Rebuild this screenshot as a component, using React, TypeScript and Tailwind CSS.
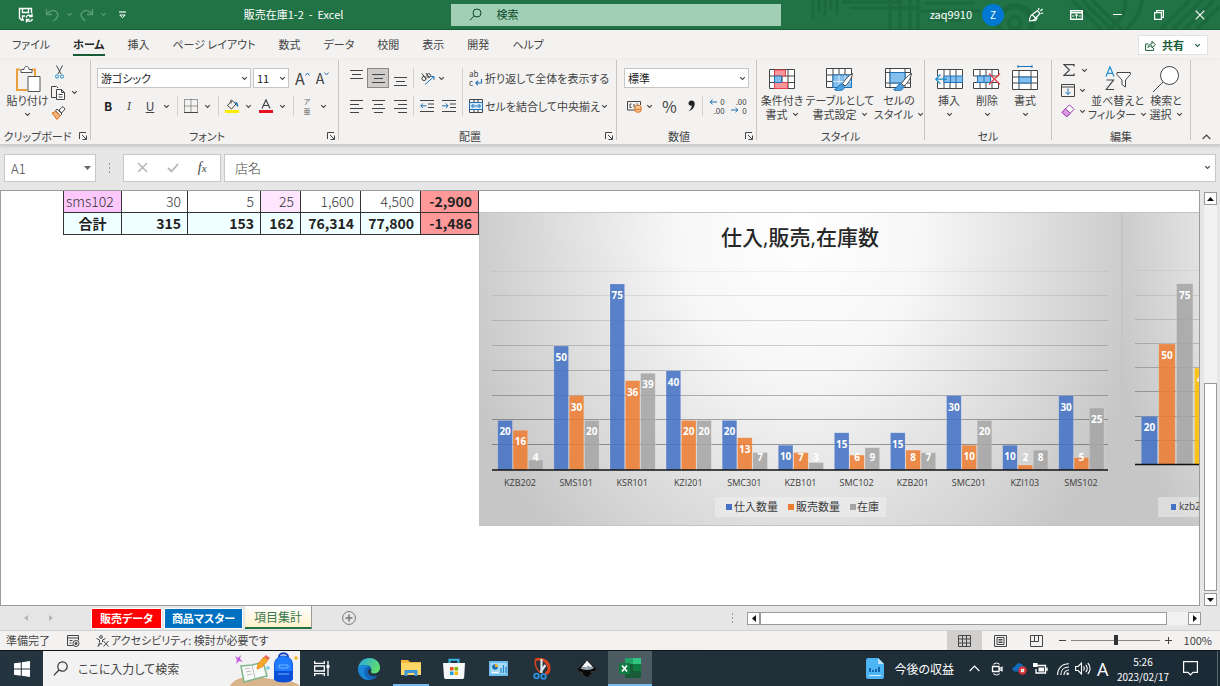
import type { ReactNode } from 'react';

interface SvgProps {
  w: number;
  h: number;
  className?: string;
  children: ReactNode;
}

function Svg({ w, h, className = '', children }: SvgProps) {
  return (
    <svg width={w} height={h} viewBox={`0 0 ${w} ${h}`} fill="none" stroke="currentColor" className={`shrink-0 ${className}`} aria-hidden="true">
      {children}
    </svg>
  );
}

function Chevron({ className = '' }: { className?: string }) {
  return (
    <Svg w={7} h={5} className={className}>
      <path d="M1.2 1.2 3.5 3.4 5.8 1.2" strokeWidth="1.1" />
    </Svg>
  );
}

function MenuButton({ label }: { label: string }) {
  return (
    <button aria-label={label} className="flex h-5 w-[10px] items-center justify-center">
      <Chevron />
    </button>
  );
}

function Sep() {
  return <div className="mx-1.5 h-5 w-px bg-[#d2d0ce]" />;
}

function Divider() {
  return <div className="mb-1 w-px shrink-0 bg-[#c8c6c4]" />;
}

/* ---------- title bar ---------- */

function TitleBar() {
  return (
    <header className="relative flex h-[30px] shrink-0 items-center overflow-hidden border-b border-[#185c37] bg-[#217346] text-[11px] text-white">
      <svg className="pointer-events-none absolute top-0 right-0" width="410" height="30" viewBox="0 0 410 30" fill="none" stroke="#1c693e" aria-hidden="true">
        <path d="M3 0v19M9 0v13M15 0v17M21 0v10M27 0v15M80 0v30M90 0v30M100 0v30M108 0v30" strokeWidth="3" />
        <path d="M32 2h60M40 8h70M115 3h50M110 11h60M118 20h34" strokeWidth="3" />
        <circle cx="205" cy="23" r="17" strokeWidth="6" />
        <circle cx="205" cy="23" r="6" strokeWidth="4" />
        <path d="M262 0l30 30M272 0l30 30M282 0l30 30M315 0c2 12-6 22-16 30M332 0c-2 14-8 22-16 30M350 30l30-30M362 30l30-30M374 30l30-30M386 30l24-24" strokeWidth="4" />
      </svg>
      <div className="relative flex w-[37%] items-center">
        <div className="flex flex-1 items-center pl-[18px]">
          <button aria-label="上書き保存">
            <Svg w={16} h={16}>
              <path d="M6 13H3.500L1.500 11V1.500h12V6M4.500 1.500v4h6v-4M4.500 13V9H7" strokeWidth="1.400" />
              <path d="M8 10.500c1-3 4.500-3 5.500-1M14 6.500V9.500h-3M14.500 12c-1 3-4.500 3-5.500 1M8.500 15.500v-3h3" strokeWidth="1.400" />
            </Svg>
          </button>
          <button aria-label="元に戻す" className="ml-[11px] flex items-center gap-1.5 text-[#5a9a75]">
            <Svg w={15} h={14}>
              <path d="M1.500 1v5.500H7M1.500 6.500C5 2 9 1.500 11.500 4s2 5-3 9" strokeWidth="1.400" />
            </Svg>
            <Chevron />
          </button>
          <button aria-label="やり直し" className="ml-1.5 flex items-center gap-1.5 text-[#5a9a75]">
            <Svg w={15} h={14}>
              <path d="M13.500 1v5.500H8M13.500 6.500C10 2 6 1.500 3.500 4s-2 5 3 9" strokeWidth="1.400" />
            </Svg>
            <Chevron />
          </button>
          <button aria-label="クイック アクセス ツール バーのカスタマイズ" className="ml-3">
            <Svg w={7} h={8}>
              <path d="M0 1h7" strokeWidth="1.200" />
              <path d="M.8 4h5.400L3.500 6.800z" />
            </Svg>
          </button>
        </div>
        <h1 className="mr-[108px] whitespace-pre">販売在庫1-2  -  Excel</h1>
      </div>
      <label className="relative flex h-[22px] w-[27%] items-center gap-3.5 bg-[#a0cfb5] pl-[18px] text-[#0f4a28]">
        <Svg w={13} h={13}>
          <circle cx="8" cy="5" r="4" />
          <path d="M5.200 8 .8 12.300" />
        </Svg>
        <input aria-label="検索" placeholder="検索" className="min-w-0 flex-1 bg-transparent outline-none placeholder:text-[#0f4a28]" />
      </label>
      <div className="relative flex flex-1 items-center justify-end">
        <span>zaq9910</span>
        <button className="ml-2.5 flex size-[22px] items-center justify-center rounded-full bg-[#0078d4] text-[10px]">Z</button>
        <button aria-label="近日公開の機能" className="ml-3 flex w-10 justify-center">
          <Svg w={16} h={15}>
            <path d="M1.500 14c0-2 0-3.500 1.500-5.500L9.500 3.500 12 6.500 6.500 12.500c-1.500 1.200-3 1.500-5 1.500zM5 13.500c2.500.5 4-.5 4-3M10.500 3l.5-2M12.500 4 14.500 2M13 6.500l2.300-.5M4.500 8l3 3" strokeWidth="1.200" />
          </Svg>
        </button>
        <button aria-label="リボンの表示オプション" className="flex w-[41px] justify-center">
          <Svg w={13} h={10}>
            <path d="M.7.7h11.600v8.600H.7zM.7 2.700h11.600" strokeWidth="1.400" />
            <path d="M6.500 8V4.200M4.700 5.800l1.800-1.600 1.800 1.600M2 6h2M9 6h2" />
          </Svg>
        </button>
        <button aria-label="最小化" className="flex w-[41px] justify-center">
          <Svg w={9} h={9}><path d="M0 4.500h9" /></Svg>
        </button>
        <button aria-label="元に戻す (縮小)" className="flex w-[41px] justify-center">
          <Svg w={10} h={10}>
            <path d="M.6 2.600h6.800v6.800H.6z" strokeWidth="1.200" />
            <path d="M2.600 2.600v-2h6.800v6.800h-2" strokeWidth="1.200" />
          </Svg>
        </button>
        <button aria-label="閉じる" className="flex w-[41px] justify-center">
          <Svg w={10} h={10}><path d="m.7.7 8.600 8.600M9.300.7.7 9.300" strokeWidth="1.200" /></Svg>
        </button>
      </div>
    </header>
  );
}

const menuTabs = ['ファイル', 'ホーム', '挿入', 'ページ レイアウト', '数式', 'データ', '校閲', '表示', '開発', 'ヘルプ'];

function MenuTabs() {
  return (
    <nav className="flex h-[30px] shrink-0 items-center pr-3 pl-3">
      <div className="flex flex-1 items-center gap-[23px] text-[11px]">
        {menuTabs.map((tab) => (
          <button
            key={tab}
            className={
              tab === 'ホーム'
                ? 'h-[22px] border-b-2 border-[#185c37] font-bold whitespace-nowrap text-[#262626]'
                : 'h-[22px] border-b-2 border-transparent whitespace-nowrap'
            }
          >
            {tab}
          </button>
        ))}
      </div>
      <button className="flex h-5 items-center gap-1.5 border border-[#e4e2e0] bg-white px-1.5 text-[11px] font-bold text-[#185c37]">
        <Svg w={11} h={11}>
          <path d="M3.500 4H.6v6.400h8V8M3 7.500C3.500 5 5 3.800 7 3.800V1.200l3.400 3.500L7 8V5.800C5 5.800 4 6.300 3 7.500z" />
        </Svg>
        共有
        <Chevron className="ml-1" />
      </button>
    </nav>
  );
}

/* ---------- ribbon ---------- */

interface GroupProps {
  label: string;
  className: string;
  launcher?: boolean;
  children: ReactNode;
}

function Group({ label, className, launcher, children }: GroupProps) {
  return (
    <>
      <section aria-label={label} className={`flex shrink-0 flex-col ${className}`}>
        <div className="h-[68px]">{children}</div>
        <div className="flex h-4 items-center text-[11px]">
          <span className="flex-1 text-center whitespace-nowrap">{label}</span>
          {launcher && (
            <button aria-label={`${label}の設定`} className="mr-[3px] ml-1">
              <Svg w={8} h={8}>
                <path d="M.5 7V.5H7M3 3l4 4M7.500 3.500v4h-4" />
              </Svg>
            </button>
          )}
        </div>
      </section>
      <Divider />
    </>
  );
}

interface BigButtonProps {
  lines: [string, string?];
  className: string;
  icon: ReactNode;
}

function BigButton({ lines, className, icon }: BigButtonProps) {
  return (
    <button className={`flex shrink-0 flex-col items-center pt-1 text-[11px] leading-[14px] whitespace-nowrap ${className}`}>
      <span className="flex h-[29px] items-center">{icon}</span>
      <span>{lines[0]}</span>
      <span className="flex h-[14px] items-center gap-1">
        {lines[1]}
        <Chevron />
      </span>
    </button>
  );
}

interface ComboProps {
  label: string;
  value: string;
  className: string;
}

function Combo({ label, value, className }: ComboProps) {
  return (
    <div className={`relative h-5 ${className}`}>
      <select aria-label={label} className="block h-5 w-full appearance-none border border-[#c8c6c4] bg-white pl-[3px] text-[11px] text-[#222]">
        <option>{value}</option>
      </select>
      <Chevron className="pointer-events-none absolute top-2 right-[3px]" />
    </div>
  );
}

function Lines({ d }: { d: string }) {
  return (
    <Svg w={13} h={13}><path d={d} stroke="#444" /></Svg>
  );
}

const gridPath = 'M.5 2.500h25v19H.5zM.5 9h25M.5 15.500h25M7 2.500v19M13 2.500v19M19 2.500v19';

function Brush() {
  return (
    <>
      <path d="M26.500 7.500c-4 2-8 7-10 10l2.500 2.500c3.500-3 7-8 7.500-12.500z" fill="#fff" stroke="#444" />
      <path d="M15.500 18c-3.500 0-3 4.500-7 5.500 3 2.500 9.500 1.500 10-2.500z" fill="#4ba0dc" stroke="#1e72b8" />
    </>
  );
}

function Ribbon() {
  return (
    <div className="relative z-10 flex shrink-0 border-b border-[#d0cecc] shadow-[0_1px_3px_rgba(0,0,0,0.18)]">
      <Group label="クリップボード" className="w-[90px]" launcher>
        <div className="flex">
          <BigButton
            className="w-[55px]"
            lines={['貼り付け']}
            icon={
              <Svg w={26} h={28}>
                <path d="M5 4.500H2V25H12M17 4.500h3V11" stroke="#e9a03b" strokeWidth="2" />
                <path d="M6 7.500V4.500h3c0-4 5-4 5 0h3v3z" fill="#fff" stroke="#555" />
                <path d="M13 11.500h12v15H13z" fill="#fff" stroke="#555" />
              </Svg>
            }
          />
          <div className="flex flex-col items-start pt-1">
            <button aria-label="切り取り" className="h-4">
              <Svg w={9} h={14}>
                <path d="M1.500.5 6 9M7.500.5 3 9" stroke="#444" />
                <circle cx="2" cy="11.500" r="1.600" stroke="#1e8bcd" />
                <circle cx="7" cy="11.500" r="1.600" stroke="#1e8bcd" />
              </Svg>
            </button>
            <button aria-label="コピー" className="-ml-1 flex h-[25px] items-center gap-1.5">
              <Svg w={14} h={14}>
                <path d="M5 11.500H.5V.5h5l1.500 1.500" />
                <path d="M5.500 3.500h5l3 3v7h-8zM10.500 3.500v3h3M7.500 8.500h4M7.500 11h4" fill="#fff" />
              </Svg>
              <Chevron />
            </button>
            <button aria-label="書式のコピー/貼り付け" className="-ml-1 h-4">
              <Svg w={15} h={14}>
                <path d="m8 4 4-3.500L14 3l-3.500 4z" fill="#fff" stroke="#444" />
                <path d="m6 3 5 5-1.500 1.500L4.500 5z" fill="#fff" stroke="#444" />
                <path d="M4.500 5.500 1 7l5 6.500 3.500-4z" fill="#f4b27c" stroke="#d8711c" />
              </Svg>
            </button>
          </div>
        </div>
      </Group>

      <Group label="フォント" className="w-[247px]" launcher>
        <div className="flex flex-col gap-2 pt-2 pl-1.5">
          <div className="flex h-5 items-center">
            <Combo label="フォント名" value="游ゴシック" className="w-[154px]" />
            <Combo label="フォント サイズ" value="11" className="ml-0.5 w-9" />
            <button aria-label="フォント サイズの拡大" className="ml-1.5 flex text-base leading-5">
              A<Svg w={5} h={4} className="mt-1 text-[#1e72b8]"><path d="M.5 3.500 2.500 1l2 2.500" /></Svg>
            </button>
            <button aria-label="フォント サイズの縮小" className="ml-1.5 flex text-sm leading-5">
              A<Svg w={5} h={4} className="mt-1 text-[#1e72b8]"><path d="m.5.5 2 2.500 2-2.500" /></Svg>
            </button>
          </div>
          <div className="flex h-5 items-center text-xs">
            <button aria-label="太字" className="w-[22px] font-bold text-[#222]">B</button>
            <button aria-label="斜体" className="w-5 font-serif italic">I</button>
            <button aria-label="下線" className="w-[22px] underline">U</button>
            <MenuButton label="下線の種類" />
            <Sep />
            <button aria-label="罫線">
              <Svg w={14} h={14}>
                <path d="M.5.5h13v13H.5zM7 .5v13M.5 7h13" strokeDasharray="1 1" />
                <path d="M0 13.500h14" />
              </Svg>
            </button>
            <span className="w-1" />
            <MenuButton label="罫線の種類" />
            <Sep />
            <button aria-label="塗りつぶしの色">
              <Svg w={14} h={14}>
                <path d="M7 1.500 2.500 6.500l4 3.500L11 5zM6 .5v4" stroke="#444" />
                <path d="M10.500 3.500c1.500.5 2 2 2 4" stroke="#1e72b8" strokeWidth="1.600" />
                <path d="M0 12.500h14" stroke="#ffee00" strokeWidth="3" />
              </Svg>
            </button>
            <span className="w-1" />
            <MenuButton label="塗りつぶしの色を選択" />
            <span className="w-1.5" />
            <button aria-label="フォントの色">
              <Svg w={14} h={14}>
                <path d="M3 9.500 7 .8l4 8.700M4.500 6.500h5" stroke="#444" strokeWidth="1.200" />
                <path d="M0 12.500h14" stroke="#e81123" strokeWidth="3" />
              </Svg>
            </button>
            <span className="w-1" />
            <MenuButton label="フォントの色を選択" />
            <Sep />
            <button aria-label="ふりがなの表示" className="flex h-5 w-3.5 flex-col items-center text-[7px] leading-[10px] text-[#666]">
              <span>ア</span>
              <span>亜</span>
            </button>
            <span className="w-1" />
            <MenuButton label="ふりがなの設定" />
          </div>
        </div>
      </Group>

      <Group label="配置" className="w-[277px]" launcher>
        <div className="flex pt-2 pl-1.5">
          <div className="grid grid-cols-3 gap-y-2">
            <button aria-label="上揃え" className="flex h-5 w-[22px] justify-center"><Lines d="M0 2.500h13M2 6.500h9M0 10.500h13" /></button>
            <button aria-label="上下中央揃え" className="flex h-5 w-[22px] items-center justify-center border border-[#8a8886] bg-[#cfcdcb]"><Lines d="M0 2.500h13M2 6.500h9M0 10.500h13" /></button>
            <button aria-label="下揃え" className="flex h-5 w-[22px] items-end justify-center"><Lines d="M0 2.500h13M2 6.500h9M0 10.500h13" /></button>
            <button aria-label="左揃え" className="flex h-5 w-[22px] items-center justify-center"><Lines d="M0 .5h13M0 4.500h9M0 8.500h13M0 12.500h9" /></button>
            <button aria-label="中央揃え" className="flex h-5 w-[22px] items-center justify-center"><Lines d="M0 .5h13M2 4.500h9M0 8.500h13M2 12.500h9" /></button>
            <button aria-label="右揃え" className="flex h-5 w-[22px] items-center justify-center"><Lines d="M0 .5h13M4 4.500h9M0 8.500h13M4 12.500h9" /></button>
          </div>
          <div className="mr-1.5 ml-0.5 flex flex-col gap-2">
            <div className="h-5 w-px bg-[#d2d0ce]" />
            <div className="h-5 w-px bg-[#d2d0ce]" />
          </div>
          <div className="flex flex-col gap-2">
            <div className="flex h-5 items-center">
              <button aria-label="方向">
                <Svg w={16} h={15}>
                  <circle cx="4" cy="7.500" r="2.100" />
                  <path d="M2 2.500 6 8M6 2l3.500 5" />
                  <circle cx="8.700" cy="4.500" r="1.900" />
                  <path d="m5 13.500 9-8M10.500 5.500H14V9" stroke="#1e72b8" />
                </Svg>
              </button>
              <MenuButton label="方向の種類" />
            </div>
            <div className="flex h-5 items-center gap-2">
              <button aria-label="インデントを減らす">
                <Svg w={14} h={12}>
                  <path d="M0 .5h14M8 4h6M8 7.500h6M0 11.500h14" />
                  <path d="M6.500 5.800H.8M3 3.500.7 5.800 3 8" stroke="#1e72b8" />
                </Svg>
              </button>
              <button aria-label="インデントを増やす">
                <Svg w={14} h={12}>
                  <path d="M0 .5h14M8 4h6M8 7.500h6M0 11.500h14" />
                  <path d="M0 5.800h6M3.800 3.500l2.300 2.300L3.800 8" stroke="#1e72b8" />
                </Svg>
              </button>
            </div>
          </div>
          <div className="mx-1.5 h-12 w-px bg-[#d2d0ce]" />
          <div className="flex flex-1 flex-col gap-2 text-[11px]">
            <button className="flex h-5 items-center gap-0.5 whitespace-nowrap">
              <span className="relative flex h-[18px] w-3.5 flex-col items-start text-[8px] leading-[9px]">
                <span>ab</span>
                <span>c</span>
                <Svg w={8} h={8} className="absolute right-0 bottom-0 text-[#1e72b8]">
                  <path d="M6.500 0v4H1M3 1.800.8 4 3 6.200" strokeWidth="1.200" />
                </Svg>
              </span>
              折り返して全体を表示する
            </button>
            <div className="flex h-5 items-center">
              <button className="flex items-center gap-0.5 whitespace-nowrap">
                <Svg w={14} h={14}>
                  <path d="M.5.5h13v13H.5zM5 .5v3M9 .5v3M5 10.500v3M9 10.500v3" />
                  <path d="M.5 3.500h13v7H.5z" fill="#d5eafb" stroke="#1e72b8" />
                  <path d="M2.500 7h9M4.500 5l-2 2 2 2M9.500 5l2 2-2 2" stroke="#1e72b8" />
                </Svg>
                セルを結合して中央揃え
              </button>
              <MenuButton label="結合の種類" />
            </div>
          </div>
        </div>
      </Group>

      <Group label="数値" className="w-[139px]" launcher>
        <div className="flex flex-col gap-2 px-[7px] pt-2">
          <Combo label="表示形式" value="標準" className="w-full" />
          <div className="flex h-5 items-center">
            <span className="w-[3px]" />
            <button aria-label="通貨表示形式">
              <Svg w={15} h={13}>
                <path d="M8 10H.5V1.500h13V5M4.500 4H3v3.500h1.500M7 4v3.500M9.500 4h1.500" />
                <path d="M8 6.500c0-1.500 6-1.500 6 0v4.500c0 1.500-6 1.500-6 0z" fill="#f7c79a" stroke="#d8711c" />
                <path d="M8 8.800c1 1 5 1 6 0" stroke="#d8711c" />
              </Svg>
            </button>
            <span className="w-0.5" />
            <MenuButton label="通貨の種類" />
            <button aria-label="パーセント スタイル" className="ml-2 text-base leading-5">%</button>
            <button aria-label="桁区切りスタイル" className="ml-2.5">
              <Svg w={9} h={12}>
                <path d="M4.500.5C2.500.5 1.500 2 1.500 3.300 1.500 5 3 6 4.800 5.600 4.600 8 3.500 9.800 1.500 11.300c4-1.300 6.300-4.500 6.200-7.800C7.600 1.500 6.300.5 4.500.5z" fill="#222" stroke="none" />
              </Svg>
            </button>
            <Sep />
            <button aria-label="小数点以下の表示桁数を増やす" className="relative flex h-[18px] w-4 flex-col items-end text-[8px] leading-[9px]">
              <span>0</span>
              <span>.00</span>
              <Svg w={8} h={6} className="absolute top-0.5 left-0 text-[#1e72b8]"><path d="M8 3H1M3.500.8 1 3l2.500 2.200" /></Svg>
            </button>
            <button aria-label="小数点以下の表示桁数を減らす" className="relative ml-1.5 flex h-[18px] w-4 flex-col items-end text-[8px] leading-[9px]">
              <span>.00</span>
              <span>0</span>
              <Svg w={8} h={6} className="absolute bottom-0.5 left-0 text-[#1e72b8]"><path d="M0 3h7M4.500.8 7 3 4.500 5.200" /></Svg>
            </button>
          </div>
        </div>
      </Group>

      <Group label="スタイル" className="w-[167px]">
        <div className="flex pl-0.5">
          <BigButton
            className="w-[46px]"
            lines={['条件付き', '書式']}
            icon={
              <Svg w={26} h={24}>
                <path d={gridPath} fill="#fff" />
                <path d="M5.500 3h11v6h-11zM5.500 15.500h13v6h-13z" fill="#f8969b" stroke="#e8414b" />
                <path d="M5.500 9h7v6.500h-7z" fill="#83beec" stroke="#1e72b8" />
              </Svg>
            }
          />
          <BigButton
            className="w-[70px]"
            lines={['テーブルとして', '書式設定']}
            icon={
              <Svg w={28} h={25}>
                <path d={gridPath} fill="#fff" />
                <path d="M7 9h18.500v12.500H7z" fill="#83beec" stroke="#1e72b8" />
                <path d="M7 15.500h18M13 9v12M19 9v12" stroke="#d5eafb" />
                <Brush />
              </Svg>
            }
          />
          <BigButton
            className="w-12"
            lines={['セルの', 'スタイル']}
            icon={
              <Svg w={28} h={25}>
                <path d="M.5 2.500h25v19H.5zM.5 6.500h25M5 2.500v19M20 2.500v19M.5 17h25" fill="#fff" />
                <path d="M5 6.500h15V17H5z" fill="#83beec" stroke="#1e72b8" />
                <Brush />
              </Svg>
            }
          />
        </div>
      </Group>

      <Group label="セル" className="w-[126px]">
        <div className="flex pl-[5px]">
          <BigButton
            className="w-[38px]"
            lines={['挿入']}
            icon={
              <Svg w={28} h={24}>
                <path d="M2.500 2.500h25v19h-25zM9 2.500v19M15 2.500v19M21 2.500v19" fill="#fff" />
                <path d="M9 9h18.500v6.500H9z" fill="#83beec" stroke="#1e72b8" />
                <path d="M15.500 9v6M21 9v6" stroke="#1e72b8" />
                <path d="M0 9h8v6H0z" fill="#f3f2f1" stroke="none" />
                <path d="M12 12.200H1M5.500 7.500.8 12.200l4.700 4.700" stroke="#1e8bcd" strokeWidth="1.300" />
              </Svg>
            }
          />
          <BigButton
            className="w-[38px]"
            lines={['削除']}
            icon={
              <Svg w={28} h={24}>
                <path d="M.5 2.500h25V9H.5zM.5 15.500h25v6H.5zM7 2.500V9M13 2.500V9M19 2.500V9M7 15.500v6M13 15.500v6M19 15.500v6" fill="#fff" />
                <path d="M4.500 9h13v6.500h-13zM11 9v6.500" fill="#83beec" stroke="#1e72b8" />
                <path d="m16 6.500 11 11M27 6.500l-11 11" stroke="#e8414b" strokeWidth="1.300" />
              </Svg>
            }
          />
          <BigButton
            className="w-[38px]"
            lines={['書式']}
            icon={
              <Svg w={26} h={28}>
                <path d="M.5 5.500h25v19H.5zM.5 12h25M.5 18h25M7 5.500v19M19 5.500v19" fill="#fff" />
                <path d="M7 12h12v6H7z" fill="#83beec" stroke="#1e72b8" />
                <path d="M6 1.500h14M6 0v3M20 0v3" stroke="#1e72b8" />
              </Svg>
            }
          />
        </div>
      </Group>

      <Group label="編集" className="w-[138px]">
        <div className="flex pl-[7px]">
          <div className="flex flex-col">
            <button aria-label="オート SUM" className="flex h-5 w-8 items-center gap-1.5 pl-1">
              <Svg w={12} h={12}><path d="M11 2.500V.6H1L6.500 6 1 11.400h10V9.500" strokeWidth="1.200" /></Svg>
              <Chevron />
            </button>
            <button aria-label="フィル" className="flex h-[21px] w-8 items-center gap-1 pl-0.5">
              <Svg w={14} h={13}>
                <path d="M.5.5h13v12H.5zM.5 3h13" />
                <path d="M7 4.500v6M4.500 8 7 10.500 9.500 8" stroke="#1e72b8" />
              </Svg>
              <Chevron />
            </button>
            <button aria-label="クリア" className="flex h-5 w-8 items-center gap-1 pl-0.5">
              <Svg w={14} h={14}>
                <path d="M8.500.8 13 5.300 5.800 12.800 1 8.300z" fill="#fff" stroke="#a23bb0" />
                <path d="m4.500 4.700 4.800 4.600-3.500 3.500L1 8.300z" fill="#d99be0" stroke="#a23bb0" />
              </Svg>
              <Chevron />
            </button>
          </div>
          <BigButton
            className="w-[53px]"
            lines={['並べ替えと', 'フィルター']}
            icon={
              <Svg w={26} h={25}>
                <path d="m1 10.500 4-9.700 4 9.700M2.400 7.300h5.200" stroke="#1e8bcd" strokeWidth="1.200" />
                <path d="M1.500 14h7l-7.200 9.500H9" strokeWidth="1.200" />
                <path d="M12 6.500h13.300v2L20.500 14v7l-3.500-2.500V14L12 8.500z" fill="#fff" />
              </Svg>
            }
          />
          <BigButton
            className="w-11"
            lines={['検索と', '選択']}
            icon={
              <Svg w={28} h={28}>
                <circle cx="17.500" cy="10.500" r="9" fill="#fff" />
                <path d="M11 17 1 27" />
              </Svg>
            }
          />
        </div>
      </Group>

      <div className="flex flex-1 items-end justify-end pr-[9px] pb-1">
        <button aria-label="リボンを折りたたむ">
          <Svg w={9} h={6}><path d="m.7 5 3.800-3.800L8.300 5" strokeWidth="1.200" /></Svg>
        </button>
      </div>
    </div>
  );
}

/* ---------- formula bar ---------- */

function FormulaBar() {
  return (
    <div className="flex h-[45px] shrink-0 items-center bg-[#e6e6e6] px-1 text-[#444]">
      <div className="flex h-7 w-[92px] items-center border border-[#c8c8c8] bg-white pr-1">
        <input aria-label="名前ボックス" defaultValue="A1" className="w-full min-w-0 flex-1 pt-0.5 pl-1.5 text-[13px] font-light outline-none" />
        <Svg w={7} h={4}><path d="M0 0h7L3.500 4z" fill="#666" stroke="none" /></Svg>
      </div>
      <Svg w={3} h={12} className="mx-3"><path d="M1.500 1v2M1.500 5v2M1.500 9v2" stroke="#999" /></Svg>
      <div className="flex h-7 w-[98px] items-center justify-around border border-[#c8c8c8] bg-white px-1">
        <button aria-label="キャンセル"><Svg w={11} h={11}><path d="m1 1 9 9M10 1l-9 9" stroke="#b5b5b5" strokeWidth="1.500" /></Svg></button>
        <button aria-label="入力"><Svg w={12} h={10}><path d="m1 5 3.500 3.500L11 1" stroke="#b5b5b5" strokeWidth="1.800" /></Svg></button>
        <button aria-label="関数の挿入" className="font-['Liberation_Serif',serif] text-sm italic">
          f<span className="text-[11px]">x</span>
        </button>
      </div>
      <div className="ml-[3px] flex h-7 flex-1 items-center border border-[#c8c8c8] bg-white pr-1">
        <input aria-label="数式バー" defaultValue="店名" className="min-w-0 flex-1 pl-2.5 text-[13px] font-light outline-none" />
        <Chevron />
      </div>
    </div>
  );
}

/* ---------- sheet ---------- */

const BLUE = '#4472c4';
const ORANGE = '#ed7d31';
const GRAY = '#a5a5a5';
const YELLOW = '#ffc000';

const stock: [string, number, number, number][] = [
  ['KZB202', 20, 16, 4],
  ['SMS101', 50, 30, 20],
  ['KSR101', 75, 36, 39],
  ['KZI201', 40, 20, 20],
  ['SMC301', 20, 13, 7],
  ['KZB101', 10, 7, 3],
  ['SMC102', 15, 6, 9],
  ['KZB201', 15, 8, 7],
  ['SMC201', 30, 10, 20],
  ['KZI103', 10, 2, 8],
  ['SMS102', 30, 5, 25],
];

interface BarProps {
  x: number;
  base: number;
  unit: number;
  width: number;
  value: number;
  color: string;
}

function Bar({ x, base, unit, width, value, color }: BarProps) {
  const top = base - value * unit;
  return (
    <g>
      <rect x={x} y={top} width={width} height={base - top} fill={color} fillOpacity="0.87" stroke="#ffffff" strokeOpacity="0.25" strokeWidth="0.6" />
      <text x={x + width / 2} y={Math.min(top + 15, base - 9)} textAnchor="middle" fontSize="10" fontWeight="700" fill="#fff">
        {value}
      </text>
    </g>
  );
}

function GridLines({ x1, x2, base, step }: { x1: number; x2: number; base: number; step: number }) {
  return (
    <>
      {[1, 2, 3, 4, 5, 6, 7, 8].map((n) => (
        <path key={n} d={`M${x1} ${Math.round(base - n * step) - 0.5}H${x2}`} stroke="#000" strokeOpacity={0.4 - n * 0.044} />
      ))}
    </>
  );
}

function StockChart() {
  const series = [BLUE, ORANGE, GRAY];
  return (
    <svg width="643" height="314" viewBox="0 0 643 314" className="mt-[21px] shrink-0 font-['Open_Sans','Noto_Sans_CJK_JP',sans-serif] [font-feature-settings:normal]" role="img" aria-label="仕入,販売,在庫数">
      <defs>
        <radialGradient id="stock-bg" gradientUnits="userSpaceOnUse" cx="0" cy="0" r="1" gradientTransform="translate(321 0) scale(355 460)">
          <stop offset="0" stopColor="#ffffff" />
          <stop offset="0.35" stopColor="#f7f7f7" />
          <stop offset="1" stopColor="#c6c6c6" />
        </radialGradient>
      </defs>
      <rect x="0.5" y="0.5" width="642" height="313" fill="url(#stock-bg)" stroke="#c4c4c4" />
      <text x="321" y="33" textAnchor="middle" fontSize="21" fontWeight="500" fill="#262626">仕入,販売,在庫数</text>
      <GridLines x1={13} x2={629} base={258} step={24.8} />
      {stock.map(([name, ...values], i) => (
        <g key={name}>
          {values.map((value, s) => (
            <Bar key={s} x={18.800 + i * 56.100 + s * 15.300} base={258} unit={2.480} width={14.600} value={value} color={series[s]} />
          ))}
          <text x={41 + i * 56.100} y="274" textAnchor="middle" fontSize="9" fill="#404040">{name}</text>
        </g>
      ))}
      <path d="M13 258h616" stroke="#111" strokeWidth="1.500" />
      <rect x="236" y="285" width="171" height="20" fill="#f2f2f2" fillOpacity="0.5" />
      <g fontSize="11" fill="#404040">
        <rect x="247" y="292" width="6" height="6" fill={BLUE} />
        <text x="255" y="299">仕入数量</text>
        <rect x="309" y="292" width="6" height="6" fill={ORANGE} />
        <text x="317" y="299">販売数量</text>
        <rect x="371" y="292" width="6" height="6" fill={GRAY} />
        <text x="378" y="299">在庫</text>
      </g>
    </svg>
  );
}

function PurchaseChart() {
  return (
    <svg width="480" height="314" viewBox="0 0 480 314" className="mt-[21px] shrink-0 font-['Open_Sans','Noto_Sans_CJK_JP',sans-serif]" role="img" aria-label="仕入数量">
      <defs>
        <radialGradient id="purchase-bg" gradientUnits="userSpaceOnUse" cx="0" cy="0" r="1" gradientTransform="translate(240 0) scale(260 440)">
          <stop offset="0" stopColor="#ffffff" />
          <stop offset="0.35" stopColor="#f7f7f7" />
          <stop offset="1" stopColor="#c6c6c6" />
        </radialGradient>
      </defs>
      <rect x="0" y="0.500" width="480" height="313" fill="url(#purchase-bg)" stroke="#c4c4c4" />
      <GridLines x1={13} x2={467} base={253} step={24.200} />
      <Bar x={19.300} base={252.500} unit={2.410} width={16.200} value={20} color={BLUE} />
      <Bar x={36.800} base={252.500} unit={2.410} width={16.400} value={50} color={ORANGE} />
      <Bar x={54.500} base={252.500} unit={2.410} width={16.400} value={75} color={GRAY} />
      <Bar x={72.500} base={252.500} unit={2.410} width={16.400} value={40} color={YELLOW} />
      <path d="M13 252.500h454" stroke="#111" strokeWidth="1.500" />
      <rect x="36" y="285" width="400" height="20" fill="#f2f2f2" fillOpacity="0.5" />
      <rect x="49" y="292" width="5" height="6" fill={BLUE} />
      <text x="57" y="298" fontSize="10" fill="#404040">kzb202</text>
    </svg>
  );
}

function Sheet() {
  const cell = 'border border-[#333] px-1.5 py-0 text-right';
  return (
    <div className="flex min-h-0 flex-1 bg-[#e6e6e6]">
      <main className="flex min-w-0 flex-1 items-start overflow-hidden border border-[#9b9b9b] bg-white">
        <div className="flex w-full min-w-0 items-start">
          <table className="ml-[62px] w-[415px] shrink-0 table-fixed border-collapse text-sm leading-[18px] text-[#333]">
            <colgroup>
              <col className="w-[58px]" />
              <col className="w-[66px]" />
              <col className="w-[73px]" />
              <col className="w-10" />
              <col className="w-[60px]" />
              <col className="w-[60px]" />
              <col className="w-[58px]" />
            </colgroup>
            <tbody>
              <tr className="h-[21px] font-light">
                <td className="border border-t-0 border-[#333] bg-[#fcc8fc] px-0.5 py-0">sms102</td>
                <td className={`${cell} border-t-0`}>30</td>
                <td className={`${cell} border-t-0`}>5</td>
                <td className={`${cell} border-t-0 bg-[#ffe6ff]`}>25</td>
                <td className={`${cell} border-t-0`}>1,600</td>
                <td className={`${cell} border-t-0`}>4,500</td>
                <td className={`${cell} border-t-0 bg-[#ff9999] font-bold text-[#222]`}>-2,900</td>
              </tr>
              <tr className="h-[22px] bg-[#f0ffff] font-bold text-[#222]">
                <td className="border border-[#333] py-0 text-center">合計</td>
                <td className={cell}>315</td>
                <td className={cell}>153</td>
                <td className={cell}>162</td>
                <td className={cell}>76,314</td>
                <td className={cell}>77,800</td>
                <td className={`${cell} bg-[#ff9999]`}>-1,486</td>
              </tr>
            </tbody>
          </table>
          <StockChart />
          <PurchaseChart />
        </div>
      </main>
      <div className="flex w-5 shrink-0 flex-col items-center pt-0.5">
        <button aria-label="上へスクロール" className="flex h-[13px] w-[13px] items-center justify-center border border-[#999] bg-white">
          <Svg w={7} h={4}><path d="M0 4h7L3.500 0z" fill="#111" stroke="none" /></Svg>
        </button>
        <div className="flex w-[13px] flex-1 flex-col bg-[#f2f2f2]">
          <div className="h-[46%]" />
          <div className="h-[54%] border border-[#999] bg-white" />
        </div>
        <button aria-label="下へスクロール" className="mt-0.5 flex h-[13px] w-[13px] items-center justify-center border border-[#999] bg-white">
          <Svg w={7} h={4}><path d="M0 0h7L3.500 4z" fill="#111" stroke="none" /></Svg>
        </button>
      </div>
    </div>
  );
}

function SheetTabs() {
  return (
    <div className="flex h-[25px] shrink-0 items-center border-b border-[#d0d0d0] bg-[#e6e6e6] text-[11px]">
      <div className="flex w-[91px] items-center gap-[21px] pl-6">
        <button aria-label="前のシート"><Svg w={4} h={6}><path d="M4 0v6L0 3z" fill="#b5b5b5" stroke="none" /></Svg></button>
        <button aria-label="次のシート"><Svg w={4} h={6}><path d="M0 0v6l4-3z" fill="#b5b5b5" stroke="none" /></Svg></button>
      </div>
      <button className="mr-0.5 h-[21px] w-[71px] border border-white bg-[#ff0000] font-bold whitespace-nowrap text-white">販売データ</button>
      <button className="mr-0.5 h-[21px] w-[79px] border border-white bg-[#0070c0] font-bold whitespace-nowrap text-white">商品マスター</button>
      <button className="h-[23px] w-[67px] self-start border-r border-b-2 border-[#217346] border-r-[#999] bg-linear-to-b from-white to-[#fff2cc] text-xs text-[#3b7a50]">項目集計</button>
      <button aria-label="新しいシート" className="ml-[30px] text-[#777]">
        <Svg w={14} h={14}>
          <circle cx="7" cy="7" r="6.400" />
          <path d="M7 3.500v7M3.500 7h7" strokeWidth="1.500" />
        </Svg>
      </button>
      <div className="flex-1" />
      <Svg w={3} h={12} className="mr-[13px]"><path d="M1.500 1v2M1.500 5v2M1.500 9v2" stroke="#999" /></Svg>
      <div className="mr-[19px] flex w-[454px] items-center">
        <button aria-label="左へスクロール" className="flex h-[13px] w-[13px] items-center justify-center border border-[#999] bg-white">
          <Svg w={4} h={7}><path d="M4 0v7L0 3.500z" fill="#111" stroke="none" /></Svg>
        </button>
        <div className="flex h-[13px] flex-1 bg-[#f2f2f2]">
          <div className="w-[95%] border border-[#999] bg-white" />
        </div>
        <button aria-label="右へスクロール" className="flex h-[13px] w-[13px] items-center justify-center border border-[#999] bg-white">
          <Svg w={4} h={7}><path d="M0 0v7l4-3.500z" fill="#111" stroke="none" /></Svg>
        </button>
      </div>
    </div>
  );
}

function StatusBar() {
  return (
    <div className="flex h-[19px] shrink-0 items-center pl-1.5 text-[11px] text-[#444]">
      <span>準備完了</span>
      <button aria-label="マクロの記録" className="ml-[17px]">
        <Svg w={13} h={12}>
          <path d="M6 10.500H.5v-10h11v5M.5 3h11M2.500 5.500h3M2.500 8h2" />
          <circle cx="9" cy="8.500" r="3" fill="#f3f2f1" />
          <circle cx="9" cy="8.500" r="1" fill="#444" />
        </Svg>
      </button>
      <button className="ml-4 flex items-center gap-0.5 whitespace-nowrap">
        <Svg w={13} h={12}>
          <circle cx="5" cy="2" r="1.400" />
          <path d="m.5 3.500 3 1.500v2.500L2 11.500 5 8l1 1.500M9.500 3.500l-3 1.500v2M7.500 6l5 5.500M12.500 6l-5 5.500" />
        </Svg>
        アクセシビリティ: 検討が必要です
      </button>
      <div className="flex-1" />
      <button aria-label="標準" className="flex h-[19px] w-[35px] items-center justify-center bg-[#d2d0ce]">
        <Svg w={13} h={12}><path d="M.5.5h12v11H.5zM.5 4h12M.5 8h12M4.500.5v11M8.500.5v11" /></Svg>
      </button>
      <button aria-label="ページ レイアウト" className="flex w-9 justify-center">
        <Svg w={13} h={12}><path d="M.5.5h12v11H.5zM3 2.500h7v7H3zM4.500 4.500h4M4.500 6h4M4.500 7.500h4" /></Svg>
      </button>
      <button aria-label="改ページ プレビュー" className="flex w-9 justify-center">
        <Svg w={13} h={12}><path d="M.5.5h12v11H.5zM4.500.5v6h4v-6M.5 6.500h4" /></Svg>
      </button>
      <button aria-label="縮小" className="ml-[5px]"><Svg w={7} h={7}><path d="M0 3.500h7" /></Svg></button>
      <input
        aria-label="ズーム"
        type="range"
        defaultValue={50}
        className="mx-[5px] h-3 w-[89px] appearance-none bg-transparent [&::-webkit-slider-runnable-track]:h-px [&::-webkit-slider-runnable-track]:bg-[#888] [&::-webkit-slider-thumb]:-mt-[5px] [&::-webkit-slider-thumb]:h-2.5 [&::-webkit-slider-thumb]:w-1 [&::-webkit-slider-thumb]:appearance-none [&::-webkit-slider-thumb]:bg-[#333]"
      />
      <button aria-label="拡大"><Svg w={7} h={7}><path d="M0 3.500h7M3.500 0v7" /></Svg></button>
      <button className="w-12 pr-2 text-right">100%</button>
    </div>
  );
}

/* ---------- taskbar ---------- */

function TaskIcon({ label, className = 'w-11', children }: { label: string; className?: string; children: ReactNode }) {
  return (
    <button aria-label={label} className={`flex h-full shrink-0 items-center justify-center ${className}`}>
      {children}
    </button>
  );
}

function Taskbar() {
  return (
    <footer className="flex h-9 shrink-0 items-center border-t border-[#0d1519] bg-linear-to-r from-[#24353f] via-[#22313a] to-[#1b2b35] text-white">
      <button aria-label="スタート" className="flex h-full w-[43px] shrink-0 items-center justify-center">
        <Svg w={16} h={16}>
          <path d="M0 2.300 6.800 1.400v6.200H0zM7.800 1.200 16 0v7.600H7.800zM0 8.500h6.800v6.200L0 13.700zM7.800 8.500H16V16l-8.200-1.200z" fill="#fff" stroke="none" />
        </Svg>
      </button>
      <label className="flex h-full w-[257px] shrink-0 items-center bg-[#f2f2f2] pl-2.5 text-[#333]">
        <Svg w={15} h={15}>
          <circle cx="9.500" cy="5.500" r="4.700" strokeWidth="1.200" />
          <path d="M6 9 .8 14.300" strokeWidth="1.200" />
        </Svg>
        <input aria-label="ここに入力して検索" placeholder="ここに入力して検索" className="ml-2.5 w-[132px] bg-transparent text-xs outline-none placeholder:text-[#444]" />
        <Svg w={70} h={35} className="ml-auto">
          <path d="M0 35c4-9 20-11 35-8s28 1 35 8z" fill="#d8b48c" stroke="none" />
          <path d="m5 5 3 2 3-3-1 4 3 3-4-1-3 3 1-4z" fill="#c45be0" stroke="none" />
          <path d="m11 15 11-1 11-3 4 14-12 3-11 3z" fill="#fafafa" stroke="#7fb58a" strokeWidth="1.500" />
          <path d="m22 14 3 13M15 18l5-1M16 21l5-1M17 24l5-1" stroke="#bbb" />
          <path d="m27 18 1-5 6-7 4 3-6 7z" fill="#f6a92d" stroke="#e98a1c" />
          <path d="m34 6 2-2 4 3-2 2z" fill="#ed6a5a" stroke="none" />
          <path d="M49 6c0-5 9-5 9 0" stroke="#1744b8" strokeWidth="2" />
          <path d="M44.500 14c0-12 18-12 18 0v14c0 4-18 4-18 0z" fill="#1f7bff" stroke="#1559e0" />
          <path d="M44.500 20h18v8c0 4-18 4-18 0z" fill="#0d4ed6" stroke="none" />
          <path d="M49 14h9v3h-9zM48 23h11" stroke="#73b6ff" />
          <circle cx="66" cy="7" r="1.800" fill="#f5b623" stroke="none" />
          <circle cx="38" cy="17" r="1.800" fill="#6fd0ee" stroke="none" />
        </Svg>
      </label>
      <TaskIcon label="タスク ビュー">
        <Svg w={16} h={15}>
          <path d="M.7 0v2.300h9.600V0M.7 5h9.600v5H.7zM.7 15v-2.300h9.600V15M14 0v15" strokeWidth="1.300" />
          <path d="M12.500 4h3v3h-3z" fill="#fff" stroke="none" />
        </Svg>
      </TaskIcon>
      <TaskIcon label="Microsoft Edge" className="w-[49px]">
        <Svg w={22} h={22}>
          <defs>
            <linearGradient id="edge-top" x1="0" y1="0" x2="1" y2="0.6">
              <stop stopColor="#2aa6e0" />
              <stop offset="1" stopColor="#5fe06a" />
            </linearGradient>
          </defs>
          <circle cx="11" cy="11" r="11" fill="#1464b8" stroke="none" />
          <path d="M.2 10C1.500 3.500 6 0 11.500 0 18 0 22 4.500 22 9.500c0 4-3 6-6 6-2 0-4-.8-3-2.300C14.500 10.500 12 7 8 7 4.500 7 1.500 8 .2 10z" fill="url(#edge-top)" stroke="none" />
          <path d="M.2 10c1.500-4 8-4.500 10.500-1C5 9 5 16 9 20c1 1 2.500 1.500 4 1.700C6 23-.5 18 .2 10z" fill="#1a86d8" stroke="none" />
          <path d="M13.300 12.500c-1 2 .5 3 3 3 2.500 0 5-1.500 5.700-4 .5 3-1 5.500-2.500 6.500-3 .8-9 .5-9.500-4 0-1.800 1-3 2-3.500.8.500 1.300 1.200 1.300 2z" fill="#24353f" stroke="none" />
        </Svg>
      </TaskIcon>
      <TaskIcon label="エクスプローラー" className="w-9 border-b-2 border-[#76b9ed]">
        <Svg w={20} h={17}>
          <path d="M0 1h7l2 2h11v13H0z" fill="#f2b73c" stroke="none" />
          <path d="M0 4h20v12H0z" fill="#ffd766" stroke="none" />
          <path d="M3.500 17v-6h13v6h-3v-3h-7v3z" fill="#3d96d8" stroke="none" />
        </Svg>
      </TaskIcon>
      <TaskIcon label="Microsoft Store" className="w-[49px]">
        <Svg w={22} h={22}>
          <path d="M6.500 5V1.800h9V5" stroke="#38b6e8" strokeWidth="2" />
          <path d="M0 5h22l-.8 14c0 1.500-1 2-2 2H3c-1 0-2-.5-2-2z" fill="#f5f7f8" stroke="none" />
          <path d="M7 9h3.500v3.500H7z" fill="#f04e23" stroke="none" />
          <path d="M11.500 9H15v3.500h-3.500z" fill="#7fba00" stroke="none" />
          <path d="M7 13.500h3.500V17H7z" fill="#1ba1e2" stroke="none" />
          <path d="M11.500 13.500H15V17h-3.500z" fill="#ffb900" stroke="none" />
        </Svg>
      </TaskIcon>
      <TaskIcon label="コントロール パネル" className="w-10">
        <Svg w={19} h={15}>
          <path d="M0 0h19v15H0z" fill="#6cbcee" stroke="none" />
          <path d="M1.500 2h16v11h-16z" fill="#a9dcf8" stroke="none" />
          <circle cx="6" cy="6" r="2.800" fill="#1b6db5" stroke="none" />
          <path d="M6 6V3a3 3 0 0 1 3 3z" fill="#f5b623" stroke="none" />
          <path d="M12 12V7M14.500 12V4M17 12V6" stroke="#2581c4" strokeWidth="1.200" />
          <path d="M3 11.500h6" stroke="#fff" />
        </Svg>
      </TaskIcon>
      <TaskIcon label="Snipping Tool" className="w-12">
        <Svg w={18} h={22}>
          <path d="M2.500 1.500c9-2 14 4 13.500 10-.3 2.500-2 4-4 4" stroke="#d5451f" strokeWidth="3" />
          <path d="M2.500 1.500c-1 5 1 10 5 13.500" stroke="#d5451f" strokeWidth="1.600" />
          <path d="M8.500 1v14M12.500 7l-5 7" stroke="#dfe6ea" strokeWidth="2.200" />
          <circle cx="3.500" cy="18" r="2.300" stroke="#2d8fe0" strokeWidth="1.800" />
          <circle cx="10.500" cy="18.500" r="2.300" stroke="#2d8fe0" strokeWidth="1.800" />
        </Svg>
      </TaskIcon>
      <TaskIcon label="Inkscape" className="w-[42px]">
        <Svg w={20} h={20}>
          <path d="M10 .5 19 9.500c1 1.200 0 2.300-1.500 2.500l-4 1 2 1.500c-1 1.500-3 1-3 2.500L10 19l-2.500-2c0-1-3-1-4-2l2.500-1-3.500-1.500C.5 12 0 10.500 1 9.500z" fill="#0a0a0a" stroke="#444" strokeWidth="0.600" />
          <path d="m10 1.500 5.500 6-2.500 1-2-1.500L9.500 9 7 8l-3 1z" fill="#f4f6f8" stroke="none" />
          <path d="m4 9 3-1 2.500 1L11 7l2 1.500L15.500 7.500 17 9c-3 2.500-11 2.500-14 0z" fill="#9ba8b8" stroke="none" />
        </Svg>
      </TaskIcon>
      <TaskIcon label="Excel" className="w-11 border-b-2 border-[#76b9ed] bg-[#4d5b63]">
        <Svg w={22} h={20}>
          <path d="M6 0h16v20H6z" fill="#185c37" stroke="none" />
          <path d="M6 0h8v6H6z" fill="#21a366" stroke="none" />
          <path d="M14 0h8v6h-8z" fill="#33c481" stroke="none" />
          <path d="M14 6h8v7h-8z" fill="#107c41" stroke="none" />
          <path d="M0 5h11v11H0z" fill="#107c41" stroke="none" />
          <path d="m3 7.500 5 6M8 7.500l-5 6" stroke="#fff" strokeWidth="1.700" />
        </Svg>
      </TaskIcon>
      <div className="flex-1" />
      <button className="flex items-center gap-2.5 text-xs whitespace-nowrap">
        <Svg w={18} h={21}>
          <path d="M2 0h10l6 6v13c0 1-1 2-2 2H2c-1 0-2-1-2-2V2C0 1 1 0 2 0z" fill="#4db5f3" stroke="none" />
          <path d="M12 0l6 6h-6z" fill="#b9e3fb" stroke="none" />
          <path d="M4 14V10M7 14V12M10 14V11M13 14V9" stroke="#0f5ea8" strokeWidth="1.800" />
          <path d="M3 17.500h12" stroke="#d9f0fd" />
        </Svg>
        今後の収益
      </button>
      <div className="ml-[15px] flex items-center">
        <button aria-label="隠れているインジケーター" className="flex w-[22px]"><Svg w={11} h={7}><path d="M.7 6 5.500 1.200 10.300 6" strokeWidth="1.200" /></Svg></button>
        <button aria-label="カメラ" className="flex w-[21px]">
          <Svg w={12} h={14}>
            <path d="M2.500 2.500c1.500-2 4.500-2 6 0M2.500 11.500c1.500 2 4.500 2 6 0" strokeWidth="1.200" />
            <path d="M1.500 4.500h6.500v5H1.500zM8.500 6.500l2.500-1.300v3.600L8.500 7.500" strokeWidth="1.300" />
          </Svg>
        </button>
        <button aria-label="OneDrive" className="flex w-[21px]">
          <Svg w={15} h={13}>
            <path d="M3.500 9.500C-.5 9-.5 5 3 4.500 4.500 0 10 .5 11 4c3 0 4 5 0 5.500z" fill="#0f6cbd" stroke="none" />
            <circle cx="10.500" cy="8.500" r="4.200" fill="#d13438" stroke="none" />
            <path d="m9 7 3 3M12 7l-3 3" strokeWidth="1.200" />
          </Svg>
        </button>
        <button aria-label="バッテリー" className="flex w-6">
          <Svg w={15} h={11}>
            <path d="M4 2.500h8.500v7.500H3V6M14 4.500v3.500" strokeWidth="1.300" />
            <path d="M5.500 4.500h5.500v4H5.500zM0 0h4.500v4H0z" fill="#fff" stroke="none" />
          </Svg>
        </button>
        <button aria-label="ネットワーク" className="flex w-[18px]">
          <Svg w={12} h={12}>
            <path d="M.6 12C.6 5 5 .8 12 .8M3.800 12C3.800 7 7 4 12 4M7 12c0-3 2-5 5-5" strokeWidth="1.100" />
            <circle cx="10.700" cy="10.700" r="1.300" fill="#fff" stroke="none" />
          </Svg>
        </button>
        <button aria-label="音量" className="flex w-[22px]">
          <Svg w={16} h={13}>
            <path d="M.6 4.500h2.500L6.500 1v11L3.100 8.500H.6zM8.500 4.500c1 1 1 3 0 4M10.700 2.800c2 2 2 5.400 0 7.400M12.800 1c3 3 3 8 0 11" strokeWidth="1.100" />
          </Svg>
        </button>
        <button aria-label="入力モード" className="w-[18px] text-left font-['Open_Sans',sans-serif] text-lg leading-5">A</button>
      </div>
      <button className="w-14 text-center text-[10px] leading-[15px]">
        5:26
        <br />
        2023/02/17
      </button>
      <button aria-label="通知" className="mr-[19px] ml-3">
        <Svg w={15} h={15}><path d="M.6.6h13.800v10.800H10L7.500 14 5 11.400H.6z" strokeWidth="1.200" /></Svg>
      </button>
      <div className="mr-0.5 h-full w-px bg-[#5a666d]" />
    </footer>
  );
}

export default function App() {
  return (
    <div className="flex h-screen flex-col overflow-hidden bg-[#f3f2f1] font-['Noto_Sans_CJK_JP',sans-serif] text-[#444] [font-feature-settings:'palt']">
      <TitleBar />
      <MenuTabs />
      <Ribbon />
      <FormulaBar />
      <Sheet />
      <SheetTabs />
      <StatusBar />
      <Taskbar />
    </div>
  );
}
